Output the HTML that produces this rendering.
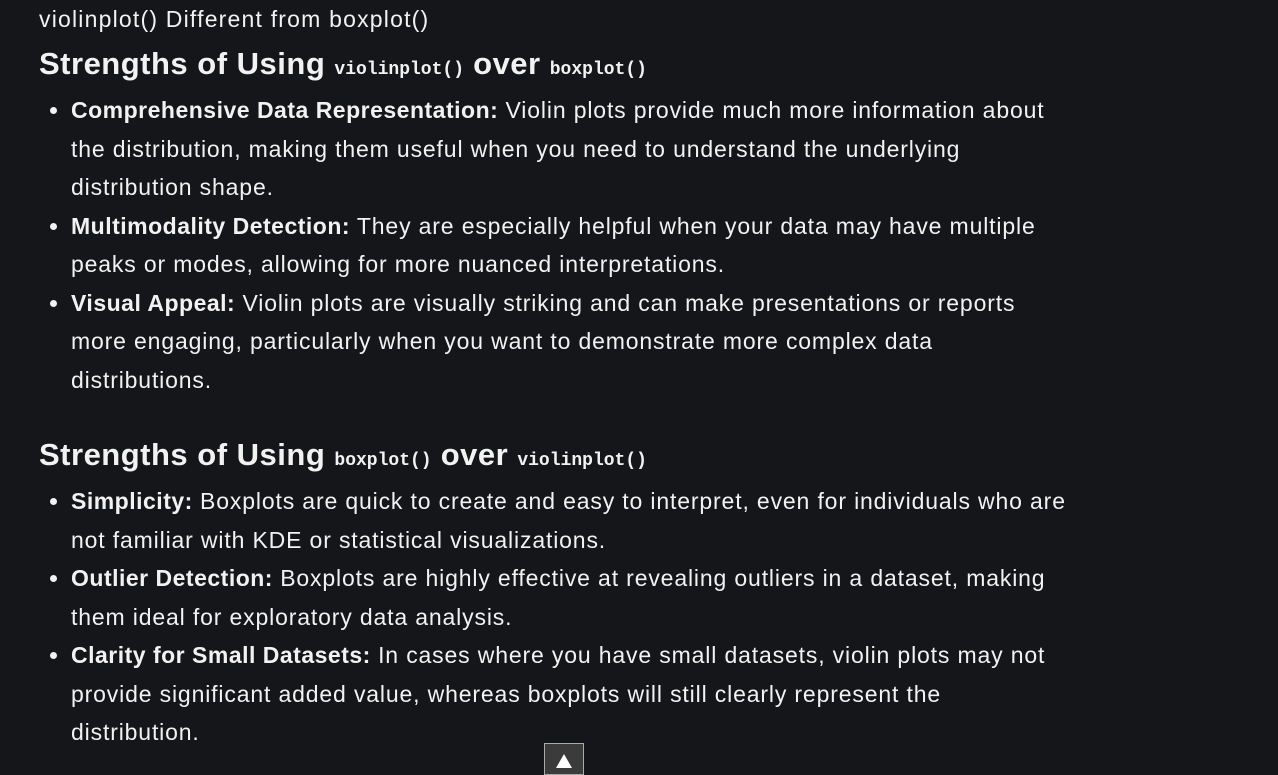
<!DOCTYPE html>
<html><head><style>
body{margin:0;background:#15161a;color:#f2f2f2;font-family:"Liberation Sans",sans-serif;width:1278px;height:768px;overflow:hidden;position:relative}
.t{position:absolute;left:39px;top:4px;font-size:23px;line-height:30px;letter-spacing:1.2px}
h2{position:absolute;left:39px;margin:0;font-size:31px;line-height:40px;font-weight:bold;letter-spacing:0.5px}
h2 code{font-family:"Liberation Mono",monospace;font-size:18px;font-weight:bold;letter-spacing:0}
ul{position:absolute;left:39px;margin:0;padding-left:32px;width:1200px;font-size:23px;line-height:38.5px;letter-spacing:0.85px;white-space:nowrap}
ul b{letter-spacing:0.5px}
li{margin:0}
.btn{position:absolute;left:544px;top:743px;width:38px;height:30px;background:#3b3b3b;border:1px solid #aaa}
.btn:after{content:"";position:absolute;left:11px;top:10px;border-left:8px solid transparent;border-right:8px solid transparent;border-bottom:14px solid #fff}
</style></head><body>
<div class="t">violinplot() Different from boxplot()</div>
<h2 style="top:44px">Strengths of Using <code>violinplot()</code> over <code>boxplot()</code></h2>
<ul style="top:91px">
<li><b>Comprehensive Data Representation:</b> Violin plots provide much more information about<br>the distribution, making them useful when you need to understand the underlying<br>distribution shape.</li>
<li><b>Multimodality Detection:</b> They are especially helpful when your data may have multiple<br>peaks or modes, allowing for more nuanced interpretations.</li>
<li><b>Visual Appeal:</b> Violin plots are visually striking and can make presentations or reports<br>more engaging, particularly when you want to demonstrate more complex data<br>distributions.</li>
</ul>
<h2 style="top:435px">Strengths of Using <code>boxplot()</code> over <code>violinplot()</code></h2>
<ul style="top:482px">
<li><b>Simplicity:</b> Boxplots are quick to create and easy to interpret, even for individuals who are<br>not familiar with KDE or statistical visualizations.</li>
<li><b>Outlier Detection:</b> Boxplots are highly effective at revealing outliers in a dataset, making<br>them ideal for exploratory data analysis.</li>
<li><b>Clarity for Small Datasets:</b> In cases where you have small datasets, violin plots may not<br>provide significant added value, whereas boxplots will still clearly represent the<br>distribution.</li>
</ul>
<div class="btn"></div>
</body></html>
